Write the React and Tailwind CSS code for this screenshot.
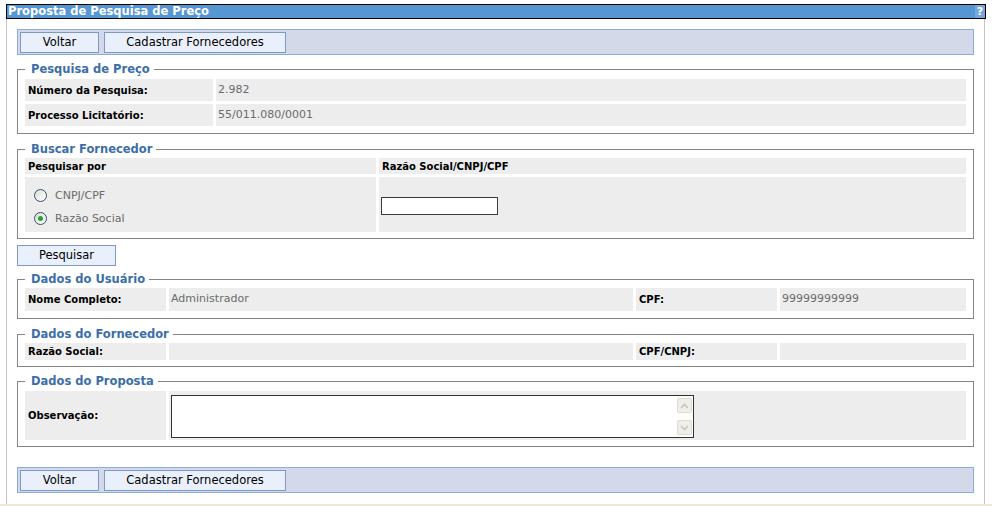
import React from "react";

function Btn({ children, className = "" }) {
  return (
    <button
      type="button"
      className={`h-[21px] border border-[#7d99c6] bg-[#e9f0fb] text-[11.5px] leading-none text-black ${className}`}
    >
      {children}
    </button>
  );
}

function Toolbar({ className = "" }) {
  return (
    <div className={`flex h-[26px] items-start gap-[5px] border border-[#8eabdc] bg-[#d3d9e8] pl-[2px] pt-[2px] ${className}`}>
      <Btn className="w-[79px]">Voltar</Btn>
      <Btn className="w-[182px]">Cadastrar Fornecedores</Btn>
    </div>
  );
}

function FS({ title, className = "", children }) {
  return (
    <fieldset className={`border border-[#858585] px-[7px] ${className}`}>
      <legend className="pl-[6px] pr-[4px] text-[11.5px] font-bold leading-[14px] text-[#3b6ea8]">
        {title}
      </legend>
      {children}
    </fieldset>
  );
}

function Label({ children, className = "" }) {
  return (
    <div className={`flex items-center bg-[#ededed] pl-[3px] text-[10px] font-bold text-black ${className}`}>
      {children}
    </div>
  );
}

function Value({ children, className = "" }) {
  return (
    <div className={`flex items-center bg-[#ededed] pl-[2px] text-[11px] text-[#6b6b6b] ${className}`}>
      {children}
    </div>
  );
}

function Radio({ checked, label }) {
  return (
    <div className="flex h-[13px] items-center">
      <span className="relative flex h-[13px] w-[13px] items-center justify-center rounded-full border border-[#33506e] bg-gradient-to-br from-[#dcdcd6] to-white">
        {checked && <span className="h-[5px] w-[5px] rounded-full bg-[#2aa52a]" />}
      </span>
      <span className="ml-[8px] text-[11px] leading-none text-[#6b6b6b]">{label}</span>
    </div>
  );
}

export default function App() {
  return (
    <div className="relative h-[506px] w-[992px] overflow-hidden bg-white font-['DejaVu_Sans',Verdana,sans-serif]">
      <div className="pt-[4px]">
        <div className="ml-[6px] flex h-[15px] w-[980px] items-center justify-between border border-black bg-[#5596d3] pl-[1px]">
          <span className="text-[11.5px] font-bold leading-none text-white">Proposta de Pesquisa de Preço</span>
          <span className="flex h-[13px] w-[10px] items-center justify-center bg-[#74a8dc] text-[11px] font-bold leading-none text-white">
            ?
          </span>
        </div>
        <div className="ml-[6px] h-[485px] w-[979px] border-x border-[#c4c4c4] px-[10px] pt-[10px]">
          <Toolbar />

          <FS title="Pesquisa de Preço" className="mt-[7px] pb-[7px] pt-[3px]">
            <div className="grid grid-cols-[188px_1fr] gap-[3px]">
              <Label className="h-[22px]">Número da Pesquisa:</Label>
              <Value className="h-[22px]">2.982</Value>
              <Label className="h-[22px]">Processo Licitatório:</Label>
              <Value className="h-[22px]">55/011.080/0001</Value>
            </div>
          </FS>

          <FS title="Buscar Fornecedor" className="mt-[8px] pb-[6px] pt-[2px]">
            <div className="grid grid-cols-[351px_1fr] gap-[3px]">
              <Label className="h-[16px]">Pesquisar por</Label>
              <Label className="h-[16px]">Razão Social/CNPJ/CPF</Label>
              <div className="flex h-[55px] flex-col gap-[10px] bg-[#ededed] pl-[9px] pt-[12px]">
                <Radio label="CNPJ/CPF" />
                <Radio checked label="Razão Social" />
              </div>
              <div className="flex h-[55px] items-center bg-[#ededed] pl-[2px] pt-[2px]">
                <input
                  type="text"
                  className="h-[18px] w-[117px] border border-[#3a3a3a] bg-white outline-none"
                />
              </div>
            </div>
          </FS>

          <Btn className="mt-[6px] w-[99px]">Pesquisar</Btn>

          <FS title="Dados do Usuário" className="mt-[6px] pb-[7px] pt-[2px]">
            <div className="grid grid-cols-[141px_1fr_141px_186px] gap-[3px]">
              <Label className="h-[23px]">Nome Completo:</Label>
              <Value className="h-[23px]">Administrador</Value>
              <Label className="h-[23px]">CPF:</Label>
              <Value className="h-[23px]">99999999999</Value>
            </div>
          </FS>

          <FS title="Dados do Fornecedor" className="mt-[8px] pb-[6px] pt-[2px]">
            <div className="grid grid-cols-[141px_1fr_141px_186px] gap-[3px]">
              <Label className="h-[17px]">Razão Social:</Label>
              <Value className="h-[17px]"></Value>
              <Label className="h-[17px]">CPF/CNPJ:</Label>
              <Value className="h-[17px]"></Value>
            </div>
          </FS>

          <FS title="Dados do Proposta" className="mt-[7px] pb-[6px] pt-[3px]">
            <div className="grid grid-cols-[141px_1fr] gap-[3px]">
              <Label className="h-[49px]">Observação:</Label>
              <div className="flex h-[49px] items-start bg-[#ededed] pl-[2px] pt-[4px]">
                <div className="flex h-[43px] w-[523px] border border-[#333] bg-white">
                  <textarea className="h-full flex-1 resize-none bg-white outline-none" />
                  <div className="flex w-[16px] flex-col justify-between bg-[#fcfcf8] py-[2px] pr-[1px]">
                    <div className="flex h-[15px] items-center justify-center rounded-[2px] border border-[#dedccf] bg-[#efeee8]">
                      <svg width="9" height="6" viewBox="0 0 9 6">
                        <path d="M1 5 L4.5 1.5 L8 5" fill="none" stroke="#c6c6c0" strokeWidth="1.6" />
                      </svg>
                    </div>
                    <div className="flex h-[15px] items-center justify-center rounded-[2px] border border-[#dedccf] bg-[#efeee8]">
                      <svg width="9" height="6" viewBox="0 0 9 6">
                        <path d="M1 1 L4.5 4.5 L8 1" fill="none" stroke="#c6c6c0" strokeWidth="1.6" />
                      </svg>
                    </div>
                  </div>
                </div>
              </div>
            </div>
          </FS>

          <Toolbar className="mt-[20px]" />
        </div>
        <div className="h-[3px] w-full bg-[#ece9d8]" />
      </div>
    </div>
  );
}
